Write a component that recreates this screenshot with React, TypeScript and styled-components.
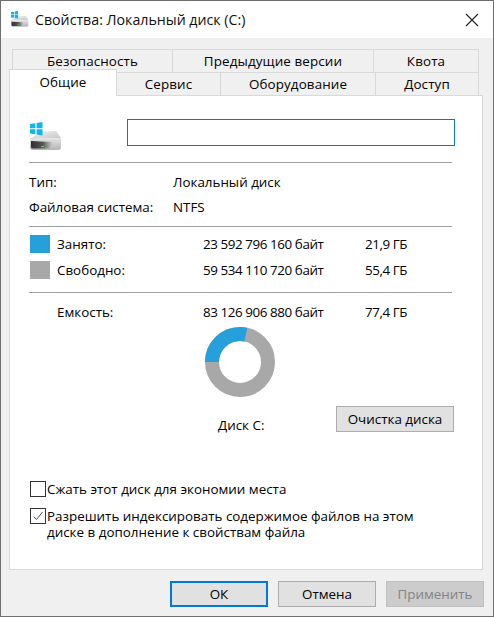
import React from "react";
import styled, { createGlobalStyle } from "styled-components";

const Global = createGlobalStyle`
  html, body { margin: 0; padding: 0; background: #f0f0f0; }
  * { box-sizing: border-box; }
  body { font-family: "Open Sans", "Noto Sans", sans-serif; font-size: 13.4px; color: #000; }
`;
const Win = styled.div`
  width: 494px; height: 617px; display: flex; flex-direction: column;
  border: 1px solid #6f6f6f; background: #f0f0f0; overflow: hidden;
`;
const TitleBar = styled.div`
  height: 37px; flex: none; background: #fff; display: flex; align-items: center;
  padding: 0 14px 0 10px; gap: 6px;
`;
const Title = styled.div`flex: 1; font-size: 14.2px; color: #111; white-space: nowrap;`;
const Body = styled.div`flex: 1; display: flex; flex-direction: column; padding: 11px 9px 9px 8px;`;
const TabRow = styled.div<{ $inset: number }>`
  display: flex; height: 23px; padding-left: ${p => p.$inset}px; flex: none;
`;
const Tab = styled.div<{ $w: number; $active?: boolean }>`
  width: ${p => p.$w}px; flex: none; display: flex; align-items: center; justify-content: center;
  border: 1px solid #d9d9d9; border-bottom: none; border-left-width: 0; letter-spacing: 0.12px;
  &:first-child { border-left-width: 1px; }
  background: ${p => (p.$active ? "#fff" : "#f0f0f0")};
  ${p => p.$active ? "height: 27px; margin-top: -3px; position: relative; z-index: 2; padding-bottom: 2px;" : ""}
`;
const Panel = styled.div`
  flex: 1; background: #fff; border: 1px solid #d9d9d9; padding: 0 20px 0 19px;
  display: flex; flex-direction: column; width: 474px;
`;
const Head = styled.div`display: flex; align-items: center; height: 66px; padding-top: 6px; flex: none;`;
const IconSlot = styled.div`width: 32px; padding: 12px 0 0 1px; flex: none;`;
const NameInput = styled.div`
  width: 328px; height: 27px; border: 1px solid #0078d7; margin-left: 66px; background: #fff; flex: none;
`;
const Sep = styled.div`height: 1px; background: #a0a0a0; flex: none; width: 423px;`;
const InfoGrid = styled.div`
  display: grid; grid-template-columns: 144px 1fr; grid-auto-rows: 25px; align-items: center;
  padding-top: 6px; height: 63px; flex: none;
`;
const StatGrid = styled.div`
  display: grid; grid-template-columns: 28px 146px 162px 1fr; grid-auto-rows: 26px; align-items: center;
  padding-top: 4px; height: 65px; flex: none;
`;
const Num = styled.div`letter-spacing: -0.42px; white-space: nowrap;`;
const Swatch = styled.div<{ $c: string }>`width: 20px; height: 18px; background: ${p => p.$c}; margin-left: 1px;`;
const CapGrid = styled(StatGrid)`height: 30px; padding-top: 6px;`;
const Donut = styled.svg`display: block; margin: 0 0 0 176px; flex: none; width: 70px; height: 70px;`;
const DonutBox = styled.div`padding-top: 4px; flex: none; height: 78px;`;
const ChartFoot = styled.div`display: flex; align-items: flex-end; height: 26px; margin-top: 5px; flex: none;`;
const DiskLabel = styled.div`margin-left: 189px; width: 118px; line-height: 18px; margin-bottom: -2px; flex: none;`;
const Btn = styled.div<{ $w: number; $primary?: boolean; $off?: boolean }>`
  width: ${p => p.$w}px; height: 26px; flex: none; display: flex; align-items: center; justify-content: center;
  background: ${p => (p.$off ? "#cccccc" : "#e1e1e1")};
  color: ${p => (p.$off ? "#838383" : "#000")};
  border: ${p => (p.$primary ? "2px solid #0078d7" : `1px solid ${p.$off ? "#bfbfbf" : "#adadad"}`)};
`;
const Checks = styled.div`display: flex; flex-direction: column; gap: 11px; padding-top: 49px; flex: none;`;
const CheckRow = styled.div`display: flex; gap: 1px; align-items: flex-start; padding-left: 1px;`;
const Box = styled.div`
  width: 16px; height: 16px; border: 1px solid #333; background: #fff; flex: none;
  display: flex; align-items: center; justify-content: center;
`;
const CheckText = styled.div`line-height: 16px; white-space: nowrap;`;
const Footer = styled.div`display: flex; justify-content: flex-end; gap: 10px; padding-top: 11px; flex: none;`;

const DriveIcon: React.FC<{ s: number }> = ({ s }) => (
  <svg width={s} height={s} viewBox="0 0 32 32" style={{ flex: "none", display: "block" }}>
    <defs>
      <linearGradient id={`t${s}`} x1="0" y1="0" x2="1" y2="1">
        <stop offset="0" stopColor="#f2f2f2" /><stop offset="1" stopColor="#c6c6c6" />
      </linearGradient>
      <linearGradient id={`d${s}`} x1="0" y1="0" x2="1" y2="0">
        <stop offset="0" stopColor="#2f2f2f" /><stop offset="0.55" stopColor="#555" /><stop offset="1" stopColor="#c8c8c8" />
      </linearGradient>
      <linearGradient id={`f${s}`} x1="0" y1="0" x2="0" y2="1">
        <stop offset="0" stopColor="#e6e6e6" /><stop offset="1" stopColor="#b4b4b4" />
      </linearGradient>
    </defs>
    <path d="M11 9.5 L26 9 L31 16 L0 17 Z" fill={`url(#t${s})`} />
    <path d="M0 17 L31 16 V25 Q31 28 28 28 H3 Q0 28 0 25 Z" fill={`url(#f${s})`} />
    <path d="M1 19 L22 20 V26.5 H3 Q1 26.5 1 25 Z" fill={`url(#d${s})`} />
    <rect x="11" y="24" width="3" height="1.2" fill="#5ad05a" />
    <path d="M0 2.1 L5.4 1.3 V6.2 H0 Z M6.6 1.1 L12.5 0 V6.2 H6.6 Z M0 7.3 H5.4 V12.2 L0 11.4 Z M6.6 7.3 H12.5 V13.4 L6.6 12.4 Z" fill="#12b4ee" />
  </svg>
);
const tabs1: [string, number][] = [["Безопасность", 161], ["Предыдущие версии", 201], ["Квота", 105]];
const tabs2: [string, number, boolean?][] = [["Общие", 108, true], ["Сервис", 104], ["Оборудование", 155], ["Доступ", 103]];

export default function App() {
  return (
    <Win>
      <Global />
      <TitleBar>
        <DriveIcon s={18} />
        <Title>Свойства: Локальный диск (C:)</Title>
        <svg width="14" height="14" viewBox="0 0 14 14"><path d="M1 1 L13 13 M13 1 L1 13" stroke="#222" strokeWidth="1.1" fill="none" /></svg>
      </TitleBar>
      <Body>
        <TabRow $inset={3}>{tabs1.map(([t, w]) => <Tab key={t} $w={w}>{t}</Tab>)}</TabRow>
        <TabRow $inset={0}>{tabs2.map(([t, w, a]) => <Tab key={t} $w={w} $active={a}>{t}</Tab>)}</TabRow>
        <Panel>
          <Head><IconSlot><DriveIcon s={32} /></IconSlot><NameInput /></Head>
          <Sep />
          <InfoGrid>
            <div>Тип:</div><div>Локальный диск</div>
            <div>Файловая система:</div><div>NTFS</div>
          </InfoGrid>
          <Sep />
          <StatGrid>
            <Swatch $c="#26a0da" /><div>Занято:</div><Num>23 592 796 160 байт</Num><Num>21,9 ГБ</Num>
            <Swatch $c="#a8a8a8" /><div>Свободно:</div><Num>59 534 110 720 байт</Num><Num>55,4 ГБ</Num>
          </StatGrid>
          <Sep />
          <CapGrid>
            <span /><div>Емкость:</div><Num>83 126 906 880 байт</Num><Num>77,4 ГБ</Num>
          </CapGrid>
          <DonutBox>
            <Donut viewBox="0 0 70 70">
              <circle cx="35" cy="35" r="28" fill="none" stroke="#a8a8a8" strokeWidth="14" />
              <circle cx="35" cy="35" r="28" fill="none" stroke="#26a0da" strokeWidth="14" strokeDasharray="49.8 176" transform="rotate(180 35 35)" />
            </Donut>
          </DonutBox>
          <ChartFoot><DiskLabel>Диск С:</DiskLabel><Btn $w={118}>Очистка диска</Btn></ChartFoot>
          <Checks>
            <CheckRow><Box /><CheckText>Сжать этот диск для экономии места</CheckText></CheckRow>
            <CheckRow>
              <Box><svg width="12" height="12" viewBox="0 0 12 12"><path d="M1.5 6.5 L4.5 9.5 L10.5 2" stroke="#555" strokeWidth="1" fill="none" /></svg></Box>
              <CheckText>Разрешить индексировать содержимое файлов на этом<br />диске в дополнение к свойствам файла</CheckText>
            </CheckRow>
          </Checks>
        </Panel>
        <Footer>
          <Btn $w={98} $primary>ОК</Btn>
          <Btn $w={98}>Отмена</Btn>
          <Btn $w={98} $off>Применить</Btn>
        </Footer>
      </Body>
    </Win>
  );
}
